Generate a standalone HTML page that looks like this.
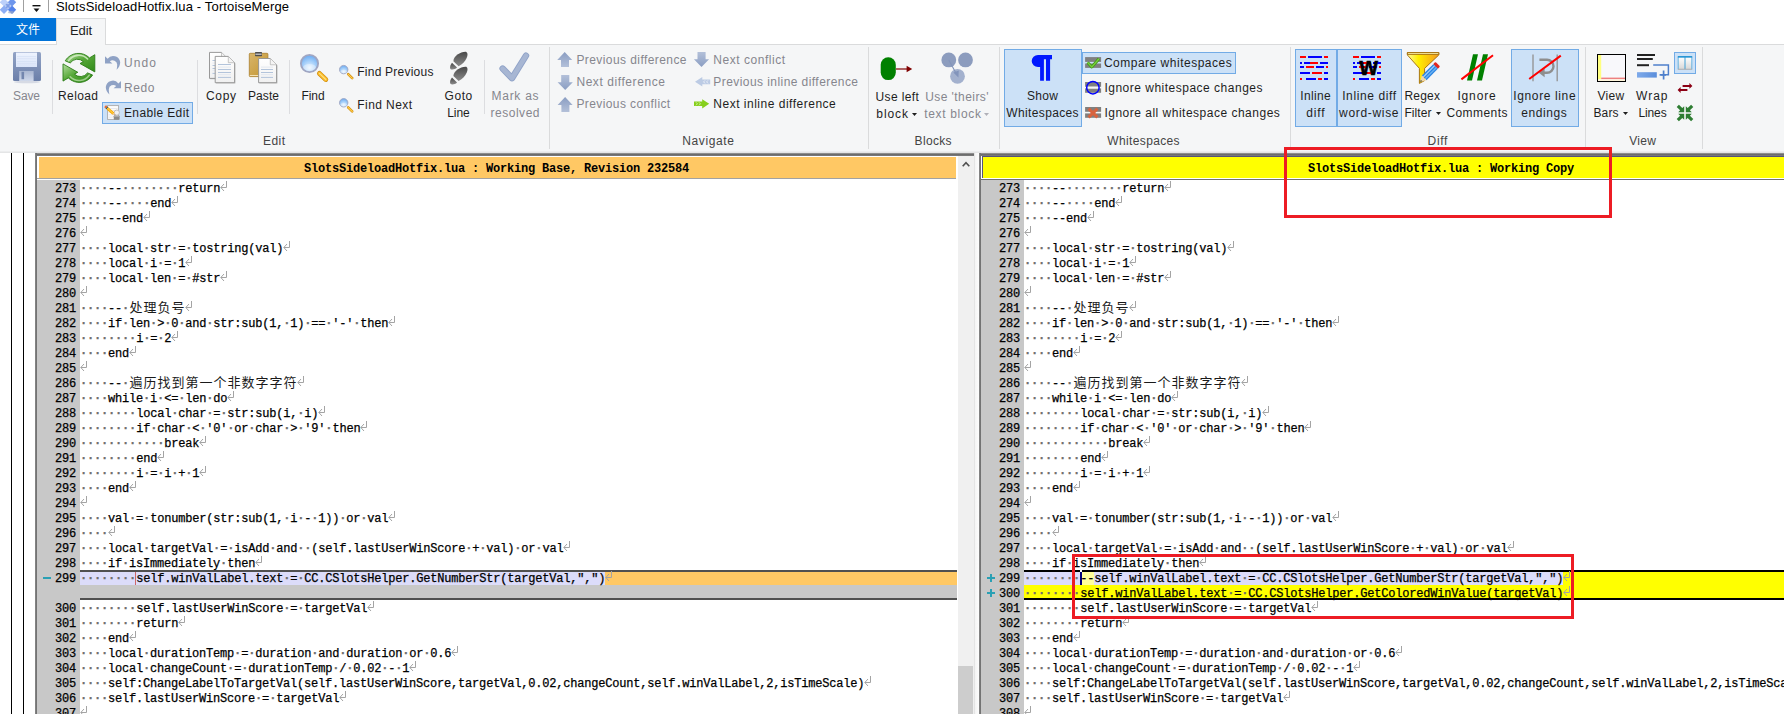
<!DOCTYPE html><html><head><meta charset="utf-8"><title>SlotsSideloadHotfix.lua - TortoiseMerge</title><style>
*{margin:0;padding:0;box-sizing:border-box}
html,body{width:1784px;height:714px;overflow:hidden;background:#fff}
body{position:relative;font-family:"Liberation Sans","Noto Sans CJK SC",sans-serif;font-size:12px;color:#1e1e1e}
.a{position:absolute}
.t{position:absolute;white-space:nowrap;line-height:16px;height:16px;font-size:12px}
.d{color:#86868e}
.g{color:#444}
.sep{position:absolute;width:1px;background:#dcdde0}
.gsep{position:absolute;width:1px;background:#dadbdc;top:47px;height:102px}
.btn{position:absolute;background:#cce1f7;border:1px solid #72abe6}
.code{position:absolute;font-family:"Liberation Mono","Noto Sans CJK SC",monospace;font-size:12px;letter-spacing:-0.2px;white-space:pre;line-height:15px;height:15px;color:#000;-webkit-text-stroke:0.25px #000}
.code i{font-style:normal;color:#6e6e6e;font-weight:bold;-webkit-text-stroke:0.3px #6e6e6e}
.code b{position:relative;top:-3px;-webkit-text-stroke:0;color:#1a1a1a;font-weight:normal;font-family:"Noto Sans CJK SC",sans-serif;font-size:13px;letter-spacing:0;display:inline-block;width:14px;height:15px;line-height:15px;vertical-align:top;text-align:center;overflow:hidden}
.ln{position:absolute;font-family:"Liberation Mono",monospace;font-size:12px;letter-spacing:-0.2px;line-height:15px;height:15px;width:40px;text-align:right;color:#000;-webkit-text-stroke:0.25px #000}
.row{position:absolute;height:15px}
.hd{position:absolute;font-family:"Liberation Mono",monospace;font-weight:bold;font-size:12px;letter-spacing:-0.2px;white-space:pre;line-height:16px;color:#000}
svg{position:absolute;overflow:visible}
</style></head><body>
<div class="a" style="left:0;top:0;width:1784px;height:18px;background:#fff"></div>
<span class="t " style="left:56.0px;top:-1.5px;letter-spacing:0.148px;font-size:13px;color:#000">SlotsSideloadHotfix.lua - TortoiseMerge</span>
<div class="a" style="left:23px;top:0;width:1px;height:12px;background:#a0a0a0"></div>
<div class="a" style="left:48px;top:0;width:1px;height:12px;background:#a0a0a0"></div>
<svg style="left:32px;top:5px" width="9" height="8" viewBox="0 0 9 8"><rect x="0.5" y="0" width="8" height="1.4" fill="#111"/><path d="M1.5 3.5h6L4.5 7z" fill="#111"/></svg>
<div class="a" style="left:0;top:18px;width:56px;height:23px;background:#0173d8"></div>
<span class="t " style="left:16.0px;top:22.0px;letter-spacing:-0.016px;color:#fff;font-size:12px">文件</span>
<div class="a" style="left:0;top:44px;width:1784px;height:108px;background:#f5f6f7;border-top:1px solid #dadbdc"></div>
<div class="a" style="left:56px;top:18px;width:50px;height:27px;background:#f5f6f7;border:1px solid #dadbdc;border-bottom:none"></div>
<span class="t " style="left:70.0px;top:22.5px;letter-spacing:-0.135px;font-size:13px;color:#1e1e1e">Edit</span>
<div class="a" style="left:0;top:151px;width:1784px;height:2px;background:linear-gradient(#f0f1f2,#e0e1e2)"></div>
<div class="gsep" style="left:549px"></div>
<div class="gsep" style="left:868px"></div>
<div class="gsep" style="left:999px"></div>
<div class="gsep" style="left:1290px"></div>
<div class="gsep" style="left:1585px"></div>
<div class="gsep" style="left:1702px"></div>
<div class="sep" style="left:52px;top:60px;height:54px"></div>
<div class="sep" style="left:197px;top:60px;height:54px"></div>
<div class="sep" style="left:289px;top:60px;height:54px"></div>
<div class="sep" style="left:484px;top:60px;height:54px"></div>
<div class="btn" style="left:102px;top:102px;width:91px;height:22px"></div>
<div class="btn" style="left:1004px;top:49px;width:78px;height:78px"></div>
<div class="btn" style="left:1082px;top:52px;width:154px;height:22px"></div>
<div class="btn" style="left:1295px;top:49px;width:42px;height:78px"></div>
<div class="btn" style="left:1337px;top:49px;width:65px;height:78px"></div>
<div class="btn" style="left:1511px;top:49px;width:68px;height:78px"></div>
<div class="btn" style="left:1674px;top:52px;width:22px;height:22px"></div>
<span class="t d" style="left:13.0px;top:88.0px;letter-spacing:-0.120px;">Save</span>
<span class="t " style="left:58.0px;top:88.0px;letter-spacing:0.394px;">Reload</span>
<span class="t d" style="left:124.0px;top:55.0px;letter-spacing:1.104px;">Undo</span>
<span class="t d" style="left:124.0px;top:80.0px;letter-spacing:0.604px;">Redo</span>
<span class="t " style="left:124.0px;top:105.0px;letter-spacing:0.361px;">Enable Edit</span>
<span class="t " style="left:206.0px;top:88.0px;letter-spacing:0.661px;">Copy</span>
<span class="t " style="left:248.0px;top:88.0px;letter-spacing:0.078px;">Paste</span>
<span class="t g" style="left:263.0px;top:133.0px;letter-spacing:0.438px;">Edit</span>
<span class="t " style="left:301.5px;top:88.0px;letter-spacing:-0.081px;">Find</span>
<span class="t " style="left:357.3px;top:64.0px;letter-spacing:0.227px;">Find Previous</span>
<span class="t " style="left:357.3px;top:97.0px;letter-spacing:0.418px;">Find Next</span>
<span class="t " style="left:444.5px;top:88.0px;letter-spacing:0.561px;">Goto</span>
<span class="t " style="left:447.3px;top:105.0px;letter-spacing:-0.096px;">Line</span>
<span class="t d" style="left:491.5px;top:88.0px;letter-spacing:0.735px;">Mark as</span>
<span class="t d" style="left:490.5px;top:105.0px;letter-spacing:0.520px;">resolved</span>
<span class="t d" style="left:576.4px;top:52.0px;letter-spacing:0.421px;">Previous difference</span>
<span class="t d" style="left:576.4px;top:74.0px;letter-spacing:0.571px;">Next difference</span>
<span class="t d" style="left:576.4px;top:96.0px;letter-spacing:0.402px;">Previous conflict</span>
<span class="t d" style="left:713.3px;top:52.0px;letter-spacing:0.537px;">Next conflict</span>
<span class="t d" style="left:713.3px;top:74.0px;letter-spacing:0.434px;">Previous inline difference</span>
<span class="t " style="left:713.3px;top:96.0px;letter-spacing:0.507px;">Next inline difference</span>
<span class="t g" style="left:682.3px;top:133.0px;letter-spacing:0.618px;">Navigate</span>
<span class="t " style="left:875.5px;top:89.0px;letter-spacing:0.387px;">Use left</span>
<span class="t " style="left:876.3px;top:106.0px;letter-spacing:0.921px;">block</span>
<span class="t d" style="left:925.2px;top:89.0px;letter-spacing:0.436px;">Use &#x27;theirs&#x27;</span>
<span class="t d" style="left:924.2px;top:106.0px;letter-spacing:0.677px;">text block</span>
<span class="t g" style="left:914.6px;top:133.0px;letter-spacing:0.331px;">Blocks</span>
<span class="t " style="left:1027.0px;top:88.0px;letter-spacing:0.323px;">Show</span>
<span class="t " style="left:1006.3px;top:105.0px;letter-spacing:0.360px;">Whitespaces</span>
<span class="t " style="left:1103.9px;top:55.0px;letter-spacing:0.504px;">Compare whitespaces</span>
<span class="t " style="left:1104.4px;top:80.0px;letter-spacing:0.500px;">Ignore whitespace changes</span>
<span class="t " style="left:1104.4px;top:105.0px;letter-spacing:0.499px;">Ignore all whitespace changes</span>
<span class="t g" style="left:1107.3px;top:133.0px;letter-spacing:0.360px;">Whitespaces</span>
<span class="t " style="left:1300.3px;top:88.0px;letter-spacing:0.322px;">Inline</span>
<span class="t " style="left:1306.2px;top:105.0px;letter-spacing:0.901px;">diff</span>
<span class="t " style="left:1342.2px;top:88.0px;letter-spacing:0.599px;">Inline diff</span>
<span class="t " style="left:1339.1px;top:105.0px;letter-spacing:0.673px;">word-wise</span>
<span class="t " style="left:1404.4px;top:88.0px;letter-spacing:0.228px;">Regex</span>
<span class="t " style="left:1404.4px;top:105.0px;letter-spacing:0.086px;">Filter</span>
<span class="t " style="left:1457.4px;top:88.0px;letter-spacing:0.854px;">Ignore</span>
<span class="t " style="left:1446.4px;top:105.0px;letter-spacing:0.441px;">Comments</span>
<span class="t " style="left:1513.3px;top:88.0px;letter-spacing:0.625px;">Ignore line</span>
<span class="t " style="left:1521.3px;top:105.0px;letter-spacing:0.559px;">endings</span>
<span class="t g" style="left:1427.6px;top:133.0px;letter-spacing:0.634px;">Diff</span>
<span class="t " style="left:1597.4px;top:88.0px;letter-spacing:0.301px;">View</span>
<span class="t " style="left:1593.5px;top:105.0px;letter-spacing:0.104px;">Bars</span>
<span class="t " style="left:1636.0px;top:88.0px;letter-spacing:1.016px;">Wrap</span>
<span class="t " style="left:1638.4px;top:105.0px;letter-spacing:-0.097px;">Lines</span>
<span class="t g" style="left:1629.2px;top:133.0px;letter-spacing:0.334px;">View</span>
<svg style="left:911.9px;top:113.0px" width="5" height="3" viewBox="0 0 5 3"><path d="M0 0h5L2.5 3z" fill="#1e1e1e"/></svg>
<svg style="left:984.3px;top:113.0px" width="5" height="3" viewBox="0 0 5 3"><path d="M0 0h5L2.5 3z" fill="#b0b0b8"/></svg>
<svg style="left:1436.0px;top:112.0px" width="5" height="3" viewBox="0 0 5 3"><path d="M0 0h5L2.5 3z" fill="#1e1e1e"/></svg>
<svg style="left:1623.0px;top:112.0px" width="5" height="3" viewBox="0 0 5 3"><path d="M0 0h5L2.5 3z" fill="#1e1e1e"/></svg>
<svg style="left:0;top:0" width="1784" height="153" viewBox="0 0 1784 153">
<defs>
<linearGradient id="gSave" x1="0" y1="0" x2="0" y2="1"><stop offset="0" stop-color="#93a4c6"/><stop offset="1" stop-color="#6b7fa9"/></linearGradient>
<linearGradient id="gSaveL" x1="0" y1="0" x2="0" y2="1"><stop offset="0" stop-color="#eef3fe"/><stop offset="1" stop-color="#dbe5f9"/></linearGradient>
<linearGradient id="gSaveS" x1="0" y1="0" x2="0" y2="1"><stop offset="0" stop-color="#aab7d2"/><stop offset="1" stop-color="#cfd8ea"/></linearGradient>
<linearGradient id="gGreen" x1="0" y1="0" x2="1" y2="1"><stop offset="0" stop-color="#b5dfa2"/><stop offset="0.45" stop-color="#58a93a"/><stop offset="1" stop-color="#2f8a17"/></linearGradient>
<linearGradient id="gGreen2" x1="1" y1="1" x2="0" y2="0"><stop offset="0" stop-color="#b5dfa2"/><stop offset="0.45" stop-color="#58a93a"/><stop offset="1" stop-color="#2f8a17"/></linearGradient>
<linearGradient id="gArr" x1="0" y1="0" x2="0" y2="1"><stop offset="0" stop-color="#8a9dc2"/><stop offset="1" stop-color="#b3c0d9"/></linearGradient>
<linearGradient id="gArrD" x1="0" y1="0" x2="0" y2="1"><stop offset="0" stop-color="#b3c0d9"/><stop offset="1" stop-color="#8a9dc2"/></linearGradient>
<linearGradient id="gPage" x1="0" y1="0" x2="0" y2="1"><stop offset="0" stop-color="#ffffff"/><stop offset="1" stop-color="#f0f0f0"/></linearGradient>
<linearGradient id="gClip" x1="0" y1="0" x2="1" y2="1"><stop offset="0" stop-color="#d8b56a"/><stop offset="1" stop-color="#c3952f"/></linearGradient>
<radialGradient id="gLens" cx="0.5" cy="0.75" r="0.8"><stop offset="0" stop-color="#e8f4ff"/><stop offset="0.55" stop-color="#9ccaf9"/><stop offset="1" stop-color="#5ea2ee"/></radialGradient>
<linearGradient id="gHandle" x1="0" y1="0" x2="1" y2="0"><stop offset="0" stop-color="#e89a10"/><stop offset="0.5" stop-color="#ffdc70"/><stop offset="1" stop-color="#e89a10"/></linearGradient>
<linearGradient id="gFoot" x1="0" y1="0" x2="0" y2="1"><stop offset="0" stop-color="#484848"/><stop offset="1" stop-color="#8c8c8c"/></linearGradient>
<linearGradient id="gFunnel" x1="0" y1="0" x2="1" y2="0"><stop offset="0" stop-color="#fff8a0"/><stop offset="0.35" stop-color="#ffee00"/><stop offset="1" stop-color="#f59a1c"/></linearGradient>
<linearGradient id="gBar" x1="0" y1="0" x2="1" y2="0"><stop offset="0" stop-color="#7eaaea"/><stop offset="1" stop-color="#5b8edb"/></linearGradient>
<linearGradient id="gPane" x1="0" y1="0" x2="0" y2="1"><stop offset="0" stop-color="#ffffff"/><stop offset="1" stop-color="#d8d8d8"/></linearGradient>
</defs>
<path d="M4.0 -2.0L8.2 2.2L4.0 6.4L-0.2 2.2z" fill="#bcd0fa"/>
<path d="M12.0 -2.0L16.2 2.2L12.0 6.4L7.8 2.2z" fill="#6e96ec"/>
<path d="M4.0 5.6L8.2 9.8L4.0 14.0L-0.2 9.8z" fill="#8eaef4"/>
<path d="M12.0 5.6L16.2 9.8L12.0 14.0L7.8 9.8z" fill="#5482ea"/>
<path d="M8.0 2.2L11.8 6.0L8.0 9.8L4.2 6.0z" fill="#7f9ee6"/>
<path d="M8.0 2.7L8.9 3.6L8.0 4.5L7.1 3.6z" fill="#d6e2fb"/>
<path d="M5.8 5.1L6.7 6.0L5.8 6.9L4.9 6.0z" fill="#d6e2fb"/>
<path d="M10.2 5.1L11.1 6.0L10.2 6.9L9.3 6.0z" fill="#d6e2fb"/>
<path d="M8.0 7.3L8.9 8.2L8.0 9.1L7.1 8.2z" fill="#d6e2fb"/>
<ellipse cx="11" cy="12.3" rx="3" ry="1.2" fill="#9aa8c8" opacity="0.7"/>
<ellipse cx="27" cy="82" rx="13" ry="1.3" fill="#c9cfdb" opacity="0.7"/>
<rect x="13" y="52" width="28" height="29" rx="1.5" fill="url(#gSave)"/>
<rect x="16" y="52.6" width="21" height="14.4" fill="url(#gSaveL)"/>
<rect x="17" y="56.0" width="19" height="0.6" fill="#d3def4"/>
<rect x="17" y="58.5" width="19" height="0.6" fill="#d3def4"/>
<rect x="17" y="61.0" width="19" height="0.6" fill="#d3def4"/>
<rect x="17" y="63.5" width="19" height="0.6" fill="#d3def4"/>
<rect x="19.2" y="71" width="14.4" height="10" fill="url(#gSaveS)"/>
<rect x="21.5" y="71.8" width="2.6" height="7.4" fill="#7386ae"/>
<path d="M65.2 60.8A15.6 15.6 0 0 1 89.5 57.9L94.8 54.7L94.8 71.9L80 63.5L83.4 61.7A8.6 8.6 0 0 0 70.3 62.9z" fill="url(#gGreen)" stroke="#2b7d16" stroke-width="0.9" stroke-linejoin="round"/>
<path d="M65.2 60.8A15.6 15.6 0 0 1 89.5 57.9L94.8 54.7L94.8 71.9L80 63.5L83.4 61.7A8.6 8.6 0 0 0 70.3 62.9z" fill="url(#gGreen2)" stroke="#2b7d16" stroke-width="0.9" stroke-linejoin="round" transform="rotate(180 78.9 67.9)"/>
<path d="M68.6 60.6A12.4 12.4 0 0 1 87.6 59" fill="none" stroke="#d6efc8" stroke-width="1.6" stroke-linecap="round" opacity="0.85"/>
<path d="M68.6 60.6A12.4 12.4 0 0 1 87.6 59" fill="none" stroke="#d6efc8" stroke-width="1.6" stroke-linecap="round" opacity="0.6" transform="rotate(180 78.9 67.9)"/>
<path d="M105 56.3L105 63.6L112.4 63.6L109.8 61.2A4.6 4.6 0 0 1 117.2 64.6Q117.2 67.4 116.6 69.8Q120.2 66.4 120.2 62.3A7 7 0 0 0 107.6 58.8z" fill="#8fa2c5"/>
<path d="M105 56.3L105 63.6L112.4 63.6L109.8 61.2A4.6 4.6 0 0 1 117.2 64.6Q117.2 67.4 116.6 69.8Q120.2 66.4 120.2 62.3A7 7 0 0 0 107.6 58.8z" fill="#8fa2c5" transform="translate(226 24.7) scale(-1 1)"/>
<rect x="107.6" y="105.6" width="11" height="13.8" fill="#fbfbfb" stroke="#ababab" stroke-width="0.9"/>
<rect x="108.6" y="108.0" width="9" height="0.6" fill="#dcdcdc"/>
<rect x="108.6" y="110.2" width="9" height="0.6" fill="#dcdcdc"/>
<rect x="108.6" y="112.4" width="9" height="0.6" fill="#dcdcdc"/>
<rect x="108.6" y="114.6" width="9" height="0.6" fill="#dcdcdc"/>
<rect x="108.6" y="116.8" width="9" height="0.6" fill="#dcdcdc"/>
<circle cx="116.8" cy="112.6" r="2.6" fill="#f2f2f2" stroke="#b8b8b8" stroke-width="0.9"/>
<rect x="113.8" y="115.8" width="5.8" height="3.9" rx="0.4" fill="#8a8a8a"/>
<rect x="113.8" y="115.8" width="5.8" height="1.2" rx="0.4" fill="#a8a8a8"/>
<g transform="translate(105.2 106.3) rotate(42)">
<rect x="-0.2" y="-1.4" width="1.9" height="2.8" rx="0.6" fill="#ea6a34"/>
<rect x="1.7" y="-1.4" width="1.2" height="2.8" fill="#3c4a4a"/>
<rect x="2.9" y="-1.4" width="8.1" height="2.8" fill="#f6a800"/>
<rect x="2.9" y="-0.5" width="8.1" height="0.9" fill="#ffd24a"/>
<path d="M11 -1.4L13.7 0L11 1.4z" fill="#eec49a"/>
<path d="M12.7 -0.5L13.7 0L12.7 0.5z" fill="#2c2c2c"/>
</g>
<path d="M209.5 52.4H221.5L226.5 57.4V78.4H209.5z" fill="#9a9a9a" opacity="0.55" transform="translate(0.8 0.8)"/>
<path d="M209.5 52.4H221.5L226.5 57.4V78.4H209.5z" fill="url(#gPage)" stroke="#8e8e8e" stroke-width="0.9"/>
<path d="M221.5 52.4V57.4H226.5" fill="#f4f4f4" stroke="#b0b0b0" stroke-width="0.7"/>
<rect x="212.5" y="60.0" width="9.5" height="1" fill="#b3c4db"/>
<rect x="212.5" y="62.5" width="9.5" height="1" fill="#e3e8f1"/>
<rect x="212.5" y="65.0" width="9.5" height="1" fill="#b3c4db"/>
<rect x="212.5" y="68.0" width="9.5" height="1" fill="#b3c4db"/>
<rect x="212.5" y="70.2" width="9.5" height="1" fill="#e3e8f1"/>
<rect x="212.5" y="72.9" width="9.5" height="1" fill="#b3c4db"/>
<path d="M215.2 56.4H228.3L234.6 62.7V82.7H215.2z" fill="#9a9a9a" opacity="0.55" transform="translate(0.8 0.8)"/>
<path d="M215.2 56.4H228.3L234.6 62.7V82.7H215.2z" fill="url(#gPage)" stroke="#8e8e8e" stroke-width="0.9"/>
<path d="M228.3 56.4V62.7H234.6" fill="#f4f4f4" stroke="#b0b0b0" stroke-width="0.7"/>
<rect x="218.0" y="64.0" width="13.0" height="1" fill="#b3c4db"/>
<rect x="218.0" y="66.6" width="13.0" height="1" fill="#e3e8f1"/>
<rect x="218.0" y="69.0" width="13.0" height="1" fill="#b3c4db"/>
<rect x="218.0" y="72.0" width="13.0" height="1" fill="#b3c4db"/>
<rect x="218.0" y="74.2" width="13.0" height="1" fill="#e3e8f1"/>
<rect x="218.0" y="76.9" width="13.0" height="1" fill="#b3c4db"/>
<rect x="249.3" y="53.3" width="18.6" height="23.3" rx="0.8" fill="url(#gClip)" stroke="#a97f2c" stroke-width="0.8"/>
<rect x="249.8" y="75" width="17.6" height="1" fill="#f4e2b4"/>
<rect x="255" y="52" width="7" height="4.2" rx="0.6" fill="#4e4e4e"/>
<rect x="255.4" y="53.6" width="6.2" height="1.2" fill="#d0d0d0"/>
<path d="M258.6 58.5H270.3L276.6 64.8V82.7H258.6z" fill="#9a9a9a" opacity="0.55" transform="translate(0.8 0.8)"/>
<path d="M258.6 58.5H270.3L276.6 64.8V82.7H258.6z" fill="url(#gPage)" stroke="#8e8e8e" stroke-width="0.9"/>
<path d="M270.3 58.5V64.8H276.6" fill="#f4f4f4" stroke="#b0b0b0" stroke-width="0.7"/>
<rect x="261.0" y="66.6" width="12.0" height="1" fill="#e3e8f1"/>
<rect x="261.0" y="69.0" width="12.0" height="1" fill="#b3c4db"/>
<rect x="261.0" y="72.0" width="12.0" height="1" fill="#b3c4db"/>
<rect x="261.0" y="74.2" width="12.0" height="1" fill="#e3e8f1"/>
<rect x="261.0" y="76.9" width="12.0" height="1" fill="#b3c4db"/>
<circle cx="309.5" cy="63.5" r="8.6" fill="url(#gLens)" stroke="#a0a6c2" stroke-width="1.9"/>
<ellipse cx="309.5" cy="67.4" rx="6.4" ry="3.4" fill="#ffffff" opacity="0.35"/>
<line x1="319.4" y1="73.4" x2="325.8" y2="79.5" stroke="#c8860c" stroke-width="4.8" stroke-linecap="round"/>
<line x1="319.4" y1="73.4" x2="325.8" y2="79.5" stroke="#f8b828" stroke-width="3.8" stroke-linecap="round"/>
<line x1="319.4" y1="73.4" x2="325.8" y2="79.5" stroke="#ffe07c" stroke-width="1.3" stroke-linecap="round"/>
<circle cx="343.7" cy="69.6" r="4.2" fill="url(#gLens)" stroke="#a0a6c2" stroke-width="0.9"/>
<ellipse cx="343.7" cy="71.5" rx="3.2" ry="1.7" fill="#ffffff" opacity="0.35"/>
<line x1="348.2" y1="74.2" x2="352.2" y2="78.2" stroke="#c8860c" stroke-width="2.5" stroke-linecap="round"/>
<line x1="348.2" y1="74.2" x2="352.2" y2="78.2" stroke="#f8b828" stroke-width="1.5" stroke-linecap="round"/>
<line x1="348.2" y1="74.2" x2="352.2" y2="78.2" stroke="#ffe07c" stroke-width="0.5" stroke-linecap="round"/>
<circle cx="343.7" cy="102.8" r="4.2" fill="url(#gLens)" stroke="#a0a6c2" stroke-width="0.9"/>
<ellipse cx="343.7" cy="104.7" rx="3.2" ry="1.7" fill="#ffffff" opacity="0.35"/>
<line x1="348.2" y1="107.4" x2="352.2" y2="111.4" stroke="#c8860c" stroke-width="2.5" stroke-linecap="round"/>
<line x1="348.2" y1="107.4" x2="352.2" y2="111.4" stroke="#f8b828" stroke-width="1.5" stroke-linecap="round"/>
<line x1="348.2" y1="107.4" x2="352.2" y2="111.4" stroke="#ffe07c" stroke-width="0.5" stroke-linecap="round"/>
<g transform="translate(0 0.0)">
<path d="M453.4 61.2C453.4 56 461 51.4 466.3 51.9C469.3 53.5 466.8 61.8 458.6 66.2z" fill="url(#gFoot)"/>
<path d="M452 62.8L457 67.6C455 69.8 451.6 70 450.4 69C449.4 67.2 450.6 64.4 452 62.8z" fill="url(#gFoot)"/>
</g>
<g transform="translate(0 14.8)">
<path d="M453.4 61.2C453.4 56 461 51.4 466.3 51.9C469.3 53.5 466.8 61.8 458.6 66.2z" fill="url(#gFoot)"/>
<path d="M452 62.8L457 67.6C455 69.8 451.6 70 450.4 69C449.4 67.2 450.6 64.4 452 62.8z" fill="url(#gFoot)"/>
</g>
<path d="M502.6 68.6L512 78.2L526 55.6" fill="none" stroke="#90a3c8" stroke-width="6.4" stroke-linecap="round" stroke-linejoin="round"/>
<path d="M502.6 68.6L512 78.2L526 55.6" fill="none" stroke="#a7b6d3" stroke-width="4.6" stroke-linecap="round" stroke-linejoin="round"/>
<path d="M564.7 52.0L572.2 59.9H569.0V66.9H561.0V59.9H557.2z" fill="url(#gArr)"/>
<path d="M561.2 75.1H569.3V82.3H572.8L565.2 90.1L557.6 82.3H561.2z" fill="url(#gArrD)"/>
<path d="M565.1 97.0L572.6 104.9H569.4V111.9H561.4V104.9H557.6z" fill="url(#gArr)"/>
<path d="M697.5 52.0H705.6V59.2H709.1L701.5 67.0L693.9 59.2H697.5z" fill="url(#gArrD)"/>
<path d="M695 81.8L702.3 77V79.6H710.2V84.2H702.3V86.6z" fill="#bccbe4"/>
<path d="M705 80.4L703.6 81.9L705 83.4M708 80.4L706.6 81.9L708 83.4" fill="none" stroke="#eef2f9" stroke-width="0.9"/>
<path d="M709.2 103.8L702.2 99.2V101.6H694V106H702.2V108.5z" fill="#86cf1c"/>
<path d="M696 102.3L697.4 103.8L696 105.3M699 102.3L700.4 103.8L699 105.3" fill="none" stroke="#d9f2ac" stroke-width="0.9"/>
<rect x="880.7" y="57.3" width="15.1" height="22.8" rx="7.5" fill="#008000"/>
<line x1="896" y1="69" x2="908" y2="69" stroke="#800000" stroke-width="1.2"/>
<path d="M906.6 65.8L912.2 69L906.6 72.2z" fill="#800000"/>
<circle cx="948.8" cy="59.9" r="7.4" fill="#8c9cbe"/>
<circle cx="965.5" cy="59.9" r="7.4" fill="#8c9cbe"/>
<circle cx="957.5" cy="76.3" r="7.4" fill="#a3b1ce"/>
<path d="M948.8 60L957 75" stroke="#8294bb" stroke-width="1.1" fill="none"/>
<path d="M953.4 72.6L958.4 77.6L958.8 70.4z" fill="#8294bb"/>
<path d="M1038 54.9H1052V59.3H1050.1V80.8H1046V59.3H1043.9V80.8H1040.1V67.1H1038A6.3 6.1 0 0 1 1038 54.9z" fill="#0018ff"/>
<rect x="1085.1" y="57.1" width="16" height="4.8" fill="#808080"/>
<rect x="1085.1" y="63.5" width="16" height="4.4" fill="#808080"/>
<path d="M1087.6 62.4L1091.8 67L1099 58.8" fill="none" stroke="#3f9a17" stroke-width="3" stroke-linejoin="round"/>
<path d="M1087.6 62.4L1091.8 67L1099 58.8" fill="none" stroke="#78cc3c" stroke-width="1.4" stroke-linejoin="round"/>
<rect x="1085.1" y="82.0" width="16" height="4.8" fill="#808080"/>
<rect x="1085.1" y="88.4" width="16" height="4.4" fill="#808080"/>
<rect x="1087" y="86.6" width="12" height="2" fill="#f5f6f7"/>
<circle cx="1092.9" cy="87.7" r="6.2" fill="none" stroke="#0000ff" stroke-width="1.5"/>
<rect x="1085.1" y="107.0" width="16" height="4.8" fill="#808080"/>
<rect x="1085.1" y="113.4" width="16" height="4.4" fill="#808080"/>
<path d="M1088.6 108.6L1097.4 117.4M1097.4 108.6L1088.6 117.4" stroke="#d8633f" stroke-width="3" fill="none"/>
<rect x="1300" y="56" width="6" height="2" fill="#ff0000"/>
<rect x="1308" y="56" width="14" height="2" fill="#0000ff"/>
<rect x="1324" y="56" width="4" height="2" fill="#ff0000"/>
<rect x="1300" y="62" width="2" height="2" fill="#0000ff"/>
<rect x="1304" y="62" width="6" height="2" fill="#0000ff"/>
<rect x="1310" y="62" width="8" height="2" fill="#ff0000"/>
<rect x="1320" y="62" width="8" height="2" fill="#0000ff"/>
<rect x="1300" y="66" width="4" height="2" fill="#0000ff"/>
<rect x="1306" y="66" width="8" height="2" fill="#ff0000"/>
<rect x="1316" y="66" width="8" height="2" fill="#0000ff"/>
<rect x="1326" y="66" width="2" height="2" fill="#ff0000"/>
<rect x="1300" y="72" width="10" height="2" fill="#0000ff"/>
<rect x="1312" y="72" width="10" height="2" fill="#ff0000"/>
<rect x="1324" y="72" width="4" height="2" fill="#0000ff"/>
<rect x="1300" y="78" width="2" height="2" fill="#ff0000"/>
<rect x="1306" y="78" width="10" height="2" fill="#0000ff"/>
<rect x="1318" y="78" width="4" height="2" fill="#ff0000"/>
<rect x="1324" y="78" width="4" height="2" fill="#0000ff"/>
<rect x="1353" y="56" width="6" height="2" fill="#ff0000"/>
<rect x="1361" y="56" width="14" height="2" fill="#0000ff"/>
<rect x="1377" y="56" width="4" height="2" fill="#ff0000"/>
<rect x="1353" y="62" width="2" height="2" fill="#0000ff"/>
<rect x="1357" y="62" width="6" height="2" fill="#0000ff"/>
<rect x="1363" y="62" width="8" height="2" fill="#ff0000"/>
<rect x="1373" y="62" width="8" height="2" fill="#0000ff"/>
<rect x="1353" y="66" width="4" height="2" fill="#0000ff"/>
<rect x="1359" y="66" width="8" height="2" fill="#ff0000"/>
<rect x="1369" y="66" width="8" height="2" fill="#0000ff"/>
<rect x="1379" y="66" width="2" height="2" fill="#ff0000"/>
<rect x="1353" y="72" width="10" height="2" fill="#0000ff"/>
<rect x="1365" y="72" width="10" height="2" fill="#ff0000"/>
<rect x="1377" y="72" width="4" height="2" fill="#0000ff"/>
<rect x="1353" y="78" width="2" height="2" fill="#ff0000"/>
<rect x="1359" y="78" width="10" height="2" fill="#0000ff"/>
<rect x="1371" y="78" width="4" height="2" fill="#ff0000"/>
<rect x="1377" y="78" width="4" height="2" fill="#0000ff"/>
<text x="1359.5" y="75" font-family="Liberation Sans, sans-serif" font-weight="bold" font-size="26" fill="#000" stroke="#000" stroke-width="0.6" textLength="18.4" lengthAdjust="spacingAndGlyphs">w</text>
<path d="M1407.4 52.6H1438.8V55L1424.6 68.4V80.6L1419.4 83.4V68.4L1407.4 55z" fill="url(#gFunnel)" stroke="#a06a08" stroke-width="0.9" stroke-linejoin="round"/>
<path d="M1407.4 52.6H1438.8V54.4H1407.4z" fill="#fff6b0" stroke="#a06a08" stroke-width="0.9"/>
<g transform="rotate(45 1429 73)">
<rect x="1425.7" y="60.6" width="6.6" height="3.4" rx="1" fill="#e02820"/>
<rect x="1425.7" y="63.8" width="6.6" height="16" fill="#2a84e2"/>
<rect x="1427.1" y="63.8" width="1.3" height="16" fill="#9fd0fa"/>
<rect x="1429.7" y="63.8" width="1.3" height="16" fill="#6cb2f2"/>
<path d="M1425.7 79.8H1432.3L1429 85.8z" fill="#f0d8a8"/>
<path d="M1428.1 83.6H1429.9L1429 85.6z" fill="#404040"/>
</g>
<path d="M1467 80.4L1473 54.2H1478L1472 80.4z" fill="#008000"/>
<path d="M1477 80.4L1483 54.2H1488L1482 80.4z" fill="#008000"/>
<line x1="1461.4" y1="79.4" x2="1493" y2="55.2" stroke="#ff0000" stroke-width="2"/>
<line x1="1533" y1="54.6" x2="1533" y2="81.2" stroke="#969696" stroke-width="1.4"/>
<line x1="1557.2" y1="54.6" x2="1557.2" y2="81.2" stroke="#969696" stroke-width="1.4"/>
<path d="M1539.4 59.8H1547A6.5 6.5 0 0 1 1547 72.8H1543" fill="none" stroke="#8e8e8e" stroke-width="2.4"/>
<path d="M1538.8 72.8L1544.6 68.4V77.2z" fill="#8e8e8e"/>
<line x1="1529.2" y1="79" x2="1560.8" y2="55.6" stroke="#ff0000" stroke-width="2"/>
<rect x="1597.5" y="54.5" width="28" height="27" fill="#f8f8fb" stroke="#000" stroke-width="1"/>
<rect x="1598" y="55" width="3.2" height="24.4" fill="#ffff80"/>
<rect x="1601.2" y="77.6" width="23.8" height="1.6" fill="#ee8080"/>
<rect x="1598" y="79.4" width="27" height="1.6" fill="#fff6dc"/>
<rect x="1637" y="54" width="18" height="2" fill="#222"/>
<rect x="1637" y="58" width="15.8" height="2" fill="#222"/>
<rect x="1637" y="64.2" width="12" height="2" fill="#222"/>
<rect x="1637" y="72.2" width="19.8" height="5.4" fill="url(#gBar)"/>
<path d="M1653.2 65H1668.4V74.8H1661" fill="none" stroke="#4f80cc" stroke-width="1.5"/>
<path d="M1659.6 74.8H1666M1663.6 70.4V79.6" stroke="#4f80cc" stroke-width="1.7" fill="none"/>
<rect x="1678.2" y="57" width="13.6" height="12" fill="url(#gPane)"/>
<path d="M1678.2 69.2V56.8H1691.8V69.2" fill="none" stroke="#4aa6dc" stroke-width="0.8"/>
<rect x="1677.8" y="56" width="14.4" height="1.6" fill="#2a96d4"/>
<line x1="1685" y1="57" x2="1685" y2="69.2" stroke="#2a96d4" stroke-width="0.9"/>
<rect x="1677.8" y="68.8" width="14.4" height="0.9" fill="#a8a8a8"/>
<path d="M1682.6 85H1689.4V83L1692.4 85.9L1689.4 88.8V86.9H1682.6z" fill="#8c0014"/>
<path d="M1687.4 89.1H1680.6V87.1L1677.6 90L1680.6 92.9V91H1687.4z" fill="#8c0014"/>
<path d="M1684.2 112.2L1678.2 112.2L1680.1 110.3L1676.7 106.9L1678.9 104.7L1682.3 108.1L1684.2 106.2z" fill="#2e7d32"/>
<path d="M1685.8 112.2L1691.8 112.2L1689.9 110.3L1693.3 106.9L1691.1 104.7L1687.7 108.1L1685.8 106.2z" fill="#2e7d32"/>
<path d="M1684.2 113.8L1678.2 113.8L1680.1 115.7L1676.7 119.1L1678.9 121.3L1682.3 117.9L1684.2 119.8z" fill="#2e7d32"/>
<path d="M1685.8 113.8L1691.8 113.8L1689.9 115.7L1693.3 119.1L1691.1 121.3L1687.7 117.9L1685.8 119.8z" fill="#2e7d32"/>
</svg>
<div class="a" style="left:0;top:153px;width:1784px;height:561px;background:#fff"></div>
<div class="a" style="left:11px;top:153px;width:1px;height:561px;background:#000"></div>
<div class="a" style="left:23px;top:153px;width:1px;height:561px;background:#000"></div>
<div class="a" style="left:35px;top:153px;width:939px;height:3px;background:linear-gradient(#a2a2a2,#6c6c6c 45%,#707070 80%,#a0a0a0)"></div>
<div class="a" style="left:35px;top:153px;width:2px;height:561px;background:linear-gradient(90deg,#8a8a8a,#6c6c6c)"></div>
<div class="a" style="left:37px;top:156px;width:937px;height:24px;background:#fff"></div>
<div class="a" style="left:39px;top:157px;width:935px;height:21px;background:#ffc864"></div>
<div class="a" style="left:37px;top:178px;width:937px;height:1px;background:#a2a2a2"></div>
<span class="hd" style="left:304px;top:161px">SlotsSideloadHotfix.lua : Working Base, Revision 232584</span>
<div class="a" style="left:37px;top:180px;width:43px;height:534px;background:#c8c8c8"></div>
<div class="a" style="left:956px;top:156px;width:2px;height:558px;background:#fff"></div>
<div class="a" style="left:958px;top:156px;width:16px;height:558px;background:#f0f0f0"></div>
<div class="a" style="left:958px;top:666px;width:15px;height:48px;background:#cdcdcd"></div>
<svg style="left:962px;top:161px" width="8" height="6" viewBox="0 0 8 6"><path d="M0.7 5.3L4 1.6l3.3 3.7" fill="none" stroke="#505050" stroke-width="1.6"/></svg>
<div class="a" style="left:974px;top:153px;width:5px;height:561px;background:linear-gradient(90deg,#e4e4e4 0,#e4e4e4 20%,#f4f4f4 20%,#fdfdfd)"></div>
<div class="a" style="left:979px;top:153px;width:805px;height:3px;background:linear-gradient(#a2a2a2,#6c6c6c 45%,#707070 80%,#a0a0a0)"></div>
<div class="a" style="left:979px;top:153px;width:2px;height:561px;background:linear-gradient(90deg,#8a8a8a,#6c6c6c)"></div>
<div class="a" style="left:981px;top:156px;width:803px;height:24px;background:#fff"></div>
<div class="a" style="left:982px;top:156px;width:802px;height:22px;background:#ffff00;border-left:1px solid #55557a;border-top:1px solid #55557a"></div>
<div class="a" style="left:981px;top:179px;width:803px;height:1px;background:#707070"></div>
<span class="hd" style="left:1308px;top:161px">SlotsSideloadHotfix.lua : Working Copy</span>
<div class="a" style="left:981px;top:180px;width:43px;height:534px;background:#c8c8c8"></div>
<div class="a" style="left:80px;top:180px;width:877px;height:534px;overflow:hidden"><div class="a" style="left:-80px;top:-180px;width:1784px;height:714px">
<div class="row" style="left:80px;top:570px;width:877px;background:#ffc864"></div>
<div class="row" style="left:80px;top:570px;width:525.0px;background:#dcdcfa"></div>
<div class="row" style="left:80px;top:585px;width:877px;background:#c8c8c8"></div>
<div class="a" style="left:80px;top:570px;width:877px;height:2px;background:#505050"></div>
<div class="a" style="left:80px;top:598px;width:877px;height:2px;background:#505050"></div>
<div class="a" style="left:135px;top:572px;width:1px;height:13px;background:#d06868"></div>
<span class="code" style="left:80.0px;top:182px"><i>·</i><i>·</i><i>·</i><i>·</i>--<i>·</i><i>·</i><i>·</i><i>·</i><i>·</i><i>·</i><i>·</i><i>·</i>return</span><svg style="left:220.0px;top:180px" width="7" height="15" viewBox="0 0 7 15"><path d="M6.5 1V7.5H1M4 4L0.8 7.5L4 11" fill="none" stroke="#a4a4a4" stroke-width="1"/></svg>
<span class="code" style="left:80.0px;top:197px"><i>·</i><i>·</i><i>·</i><i>·</i>--<i>·</i><i>·</i><i>·</i><i>·</i>end</span><svg style="left:171.0px;top:195px" width="7" height="15" viewBox="0 0 7 15"><path d="M6.5 1V7.5H1M4 4L0.8 7.5L4 11" fill="none" stroke="#a4a4a4" stroke-width="1"/></svg>
<span class="code" style="left:80.0px;top:212px"><i>·</i><i>·</i><i>·</i><i>·</i>--end</span><svg style="left:143.0px;top:210px" width="7" height="15" viewBox="0 0 7 15"><path d="M6.5 1V7.5H1M4 4L0.8 7.5L4 11" fill="none" stroke="#a4a4a4" stroke-width="1"/></svg>
<span class="code" style="left:80.0px;top:227px"></span><svg style="left:80.0px;top:225px" width="7" height="15" viewBox="0 0 7 15"><path d="M6.5 1V7.5H1M4 4L0.8 7.5L4 11" fill="none" stroke="#a4a4a4" stroke-width="1"/></svg>
<span class="code" style="left:80.0px;top:242px"><i>·</i><i>·</i><i>·</i><i>·</i>local<i>·</i>str<i>·</i>=<i>·</i>tostring(val)</span><svg style="left:283.0px;top:240px" width="7" height="15" viewBox="0 0 7 15"><path d="M6.5 1V7.5H1M4 4L0.8 7.5L4 11" fill="none" stroke="#a4a4a4" stroke-width="1"/></svg>
<span class="code" style="left:80.0px;top:257px"><i>·</i><i>·</i><i>·</i><i>·</i>local<i>·</i>i<i>·</i>=<i>·</i>1</span><svg style="left:185.0px;top:255px" width="7" height="15" viewBox="0 0 7 15"><path d="M6.5 1V7.5H1M4 4L0.8 7.5L4 11" fill="none" stroke="#a4a4a4" stroke-width="1"/></svg>
<span class="code" style="left:80.0px;top:272px"><i>·</i><i>·</i><i>·</i><i>·</i>local<i>·</i>len<i>·</i>=<i>·</i>#str</span><svg style="left:220.0px;top:270px" width="7" height="15" viewBox="0 0 7 15"><path d="M6.5 1V7.5H1M4 4L0.8 7.5L4 11" fill="none" stroke="#a4a4a4" stroke-width="1"/></svg>
<span class="code" style="left:80.0px;top:287px"></span><svg style="left:80.0px;top:285px" width="7" height="15" viewBox="0 0 7 15"><path d="M6.5 1V7.5H1M4 4L0.8 7.5L4 11" fill="none" stroke="#a4a4a4" stroke-width="1"/></svg>
<span class="code" style="left:80.0px;top:302px"><i>·</i><i>·</i><i>·</i><i>·</i>--<i>·</i><b>处</b><b>理</b><b>负</b><b>号</b></span><svg style="left:185.0px;top:300px" width="7" height="15" viewBox="0 0 7 15"><path d="M6.5 1V7.5H1M4 4L0.8 7.5L4 11" fill="none" stroke="#a4a4a4" stroke-width="1"/></svg>
<span class="code" style="left:80.0px;top:317px"><i>·</i><i>·</i><i>·</i><i>·</i>if<i>·</i>len<i>·</i>&gt;<i>·</i>0<i>·</i>and<i>·</i>str:sub(1,<i>·</i>1)<i>·</i>==<i>·</i>&#x27;-&#x27;<i>·</i>then</span><svg style="left:388.0px;top:315px" width="7" height="15" viewBox="0 0 7 15"><path d="M6.5 1V7.5H1M4 4L0.8 7.5L4 11" fill="none" stroke="#a4a4a4" stroke-width="1"/></svg>
<span class="code" style="left:80.0px;top:332px"><i>·</i><i>·</i><i>·</i><i>·</i><i>·</i><i>·</i><i>·</i><i>·</i>i<i>·</i>=<i>·</i>2</span><svg style="left:171.0px;top:330px" width="7" height="15" viewBox="0 0 7 15"><path d="M6.5 1V7.5H1M4 4L0.8 7.5L4 11" fill="none" stroke="#a4a4a4" stroke-width="1"/></svg>
<span class="code" style="left:80.0px;top:347px"><i>·</i><i>·</i><i>·</i><i>·</i>end</span><svg style="left:129.0px;top:345px" width="7" height="15" viewBox="0 0 7 15"><path d="M6.5 1V7.5H1M4 4L0.8 7.5L4 11" fill="none" stroke="#a4a4a4" stroke-width="1"/></svg>
<span class="code" style="left:80.0px;top:362px"></span><svg style="left:80.0px;top:360px" width="7" height="15" viewBox="0 0 7 15"><path d="M6.5 1V7.5H1M4 4L0.8 7.5L4 11" fill="none" stroke="#a4a4a4" stroke-width="1"/></svg>
<span class="code" style="left:80.0px;top:377px"><i>·</i><i>·</i><i>·</i><i>·</i>--<i>·</i><b>遍</b><b>历</b><b>找</b><b>到</b><b>第</b><b>一</b><b>个</b><b>非</b><b>数</b><b>字</b><b>字</b><b>符</b></span><svg style="left:297.0px;top:375px" width="7" height="15" viewBox="0 0 7 15"><path d="M6.5 1V7.5H1M4 4L0.8 7.5L4 11" fill="none" stroke="#a4a4a4" stroke-width="1"/></svg>
<span class="code" style="left:80.0px;top:392px"><i>·</i><i>·</i><i>·</i><i>·</i>while<i>·</i>i<i>·</i>&lt;=<i>·</i>len<i>·</i>do</span><svg style="left:227.0px;top:390px" width="7" height="15" viewBox="0 0 7 15"><path d="M6.5 1V7.5H1M4 4L0.8 7.5L4 11" fill="none" stroke="#a4a4a4" stroke-width="1"/></svg>
<span class="code" style="left:80.0px;top:407px"><i>·</i><i>·</i><i>·</i><i>·</i><i>·</i><i>·</i><i>·</i><i>·</i>local<i>·</i>char<i>·</i>=<i>·</i>str:sub(i,<i>·</i>i)</span><svg style="left:318.0px;top:405px" width="7" height="15" viewBox="0 0 7 15"><path d="M6.5 1V7.5H1M4 4L0.8 7.5L4 11" fill="none" stroke="#a4a4a4" stroke-width="1"/></svg>
<span class="code" style="left:80.0px;top:422px"><i>·</i><i>·</i><i>·</i><i>·</i><i>·</i><i>·</i><i>·</i><i>·</i>if<i>·</i>char<i>·</i>&lt;<i>·</i>&#x27;0&#x27;<i>·</i>or<i>·</i>char<i>·</i>&gt;<i>·</i>&#x27;9&#x27;<i>·</i>then</span><svg style="left:360.0px;top:420px" width="7" height="15" viewBox="0 0 7 15"><path d="M6.5 1V7.5H1M4 4L0.8 7.5L4 11" fill="none" stroke="#a4a4a4" stroke-width="1"/></svg>
<span class="code" style="left:80.0px;top:437px"><i>·</i><i>·</i><i>·</i><i>·</i><i>·</i><i>·</i><i>·</i><i>·</i><i>·</i><i>·</i><i>·</i><i>·</i>break</span><svg style="left:199.0px;top:435px" width="7" height="15" viewBox="0 0 7 15"><path d="M6.5 1V7.5H1M4 4L0.8 7.5L4 11" fill="none" stroke="#a4a4a4" stroke-width="1"/></svg>
<span class="code" style="left:80.0px;top:452px"><i>·</i><i>·</i><i>·</i><i>·</i><i>·</i><i>·</i><i>·</i><i>·</i>end</span><svg style="left:157.0px;top:450px" width="7" height="15" viewBox="0 0 7 15"><path d="M6.5 1V7.5H1M4 4L0.8 7.5L4 11" fill="none" stroke="#a4a4a4" stroke-width="1"/></svg>
<span class="code" style="left:80.0px;top:467px"><i>·</i><i>·</i><i>·</i><i>·</i><i>·</i><i>·</i><i>·</i><i>·</i>i<i>·</i>=<i>·</i>i<i>·</i>+<i>·</i>1</span><svg style="left:199.0px;top:465px" width="7" height="15" viewBox="0 0 7 15"><path d="M6.5 1V7.5H1M4 4L0.8 7.5L4 11" fill="none" stroke="#a4a4a4" stroke-width="1"/></svg>
<span class="code" style="left:80.0px;top:482px"><i>·</i><i>·</i><i>·</i><i>·</i>end</span><svg style="left:129.0px;top:480px" width="7" height="15" viewBox="0 0 7 15"><path d="M6.5 1V7.5H1M4 4L0.8 7.5L4 11" fill="none" stroke="#a4a4a4" stroke-width="1"/></svg>
<span class="code" style="left:80.0px;top:497px"></span><svg style="left:80.0px;top:495px" width="7" height="15" viewBox="0 0 7 15"><path d="M6.5 1V7.5H1M4 4L0.8 7.5L4 11" fill="none" stroke="#a4a4a4" stroke-width="1"/></svg>
<span class="code" style="left:80.0px;top:512px"><i>·</i><i>·</i><i>·</i><i>·</i>val<i>·</i>=<i>·</i>tonumber(str:sub(1,<i>·</i>i<i>·</i>-<i>·</i>1))<i>·</i>or<i>·</i>val</span><svg style="left:388.0px;top:510px" width="7" height="15" viewBox="0 0 7 15"><path d="M6.5 1V7.5H1M4 4L0.8 7.5L4 11" fill="none" stroke="#a4a4a4" stroke-width="1"/></svg>
<span class="code" style="left:80.0px;top:527px"><i>·</i><i>·</i><i>·</i><i>·</i></span><svg style="left:108.0px;top:525px" width="7" height="15" viewBox="0 0 7 15"><path d="M6.5 1V7.5H1M4 4L0.8 7.5L4 11" fill="none" stroke="#a4a4a4" stroke-width="1"/></svg>
<span class="code" style="left:80.0px;top:542px"><i>·</i><i>·</i><i>·</i><i>·</i>local<i>·</i>targetVal<i>·</i>=<i>·</i>isAdd<i>·</i>and<i>·</i><i>·</i>(self.lastUserWinScore<i>·</i>+<i>·</i>val)<i>·</i>or<i>·</i>val</span><svg style="left:563.0px;top:540px" width="7" height="15" viewBox="0 0 7 15"><path d="M6.5 1V7.5H1M4 4L0.8 7.5L4 11" fill="none" stroke="#a4a4a4" stroke-width="1"/></svg>
<span class="code" style="left:80.0px;top:557px"><i>·</i><i>·</i><i>·</i><i>·</i>if<i>·</i>isImmediately<i>·</i>then</span><svg style="left:255.0px;top:555px" width="7" height="15" viewBox="0 0 7 15"><path d="M6.5 1V7.5H1M4 4L0.8 7.5L4 11" fill="none" stroke="#a4a4a4" stroke-width="1"/></svg>
<span class="code" style="left:80.0px;top:572px"><i>·</i><i>·</i><i>·</i><i>·</i><i>·</i><i>·</i><i>·</i><i>·</i>self.winValLabel.text<i>·</i>=<i>·</i>CC.CSlotsHelper.GetNumberStr(targetVal,&quot;,&quot;)</span><svg style="left:605.0px;top:570px" width="7" height="15" viewBox="0 0 7 15"><path d="M6.5 1V7.5H1M4 4L0.8 7.5L4 11" fill="none" stroke="#a4a4a4" stroke-width="1"/></svg>
<span class="code" style="left:80.0px;top:602px"><i>·</i><i>·</i><i>·</i><i>·</i><i>·</i><i>·</i><i>·</i><i>·</i>self.lastUserWinScore<i>·</i>=<i>·</i>targetVal</span><svg style="left:367.0px;top:600px" width="7" height="15" viewBox="0 0 7 15"><path d="M6.5 1V7.5H1M4 4L0.8 7.5L4 11" fill="none" stroke="#a4a4a4" stroke-width="1"/></svg>
<span class="code" style="left:80.0px;top:617px"><i>·</i><i>·</i><i>·</i><i>·</i><i>·</i><i>·</i><i>·</i><i>·</i>return</span><svg style="left:178.0px;top:615px" width="7" height="15" viewBox="0 0 7 15"><path d="M6.5 1V7.5H1M4 4L0.8 7.5L4 11" fill="none" stroke="#a4a4a4" stroke-width="1"/></svg>
<span class="code" style="left:80.0px;top:632px"><i>·</i><i>·</i><i>·</i><i>·</i>end</span><svg style="left:129.0px;top:630px" width="7" height="15" viewBox="0 0 7 15"><path d="M6.5 1V7.5H1M4 4L0.8 7.5L4 11" fill="none" stroke="#a4a4a4" stroke-width="1"/></svg>
<span class="code" style="left:80.0px;top:647px"><i>·</i><i>·</i><i>·</i><i>·</i>local<i>·</i>durationTemp<i>·</i>=<i>·</i>duration<i>·</i>and<i>·</i>duration<i>·</i>or<i>·</i>0.6</span><svg style="left:451.0px;top:645px" width="7" height="15" viewBox="0 0 7 15"><path d="M6.5 1V7.5H1M4 4L0.8 7.5L4 11" fill="none" stroke="#a4a4a4" stroke-width="1"/></svg>
<span class="code" style="left:80.0px;top:662px"><i>·</i><i>·</i><i>·</i><i>·</i>local<i>·</i>changeCount<i>·</i>=<i>·</i>durationTemp<i>·</i>/<i>·</i>0.02<i>·</i>-<i>·</i>1</span><svg style="left:409.0px;top:660px" width="7" height="15" viewBox="0 0 7 15"><path d="M6.5 1V7.5H1M4 4L0.8 7.5L4 11" fill="none" stroke="#a4a4a4" stroke-width="1"/></svg>
<span class="code" style="left:80.0px;top:677px"><i>·</i><i>·</i><i>·</i><i>·</i>self:ChangeLabelToTargetVal(self.lastUserWinScore,targetVal,0.02,changeCount,self.winValLabel,2,isTimeScale)</span><svg style="left:864.0px;top:675px" width="7" height="15" viewBox="0 0 7 15"><path d="M6.5 1V7.5H1M4 4L0.8 7.5L4 11" fill="none" stroke="#a4a4a4" stroke-width="1"/></svg>
<span class="code" style="left:80.0px;top:692px"><i>·</i><i>·</i><i>·</i><i>·</i>self.lastUserWinScore<i>·</i>=<i>·</i>targetVal</span><svg style="left:339.0px;top:690px" width="7" height="15" viewBox="0 0 7 15"><path d="M6.5 1V7.5H1M4 4L0.8 7.5L4 11" fill="none" stroke="#a4a4a4" stroke-width="1"/></svg>
<span class="code" style="left:80.0px;top:707px"></span><svg style="left:80.0px;top:705px" width="7" height="15" viewBox="0 0 7 15"><path d="M6.5 1V7.5H1M4 4L0.8 7.5L4 11" fill="none" stroke="#a4a4a4" stroke-width="1"/></svg>
</div></div>
<span class="ln" style="left:36px;top:182px">273</span>
<span class="ln" style="left:36px;top:197px">274</span>
<span class="ln" style="left:36px;top:212px">275</span>
<span class="ln" style="left:36px;top:227px">276</span>
<span class="ln" style="left:36px;top:242px">277</span>
<span class="ln" style="left:36px;top:257px">278</span>
<span class="ln" style="left:36px;top:272px">279</span>
<span class="ln" style="left:36px;top:287px">280</span>
<span class="ln" style="left:36px;top:302px">281</span>
<span class="ln" style="left:36px;top:317px">282</span>
<span class="ln" style="left:36px;top:332px">283</span>
<span class="ln" style="left:36px;top:347px">284</span>
<span class="ln" style="left:36px;top:362px">285</span>
<span class="ln" style="left:36px;top:377px">286</span>
<span class="ln" style="left:36px;top:392px">287</span>
<span class="ln" style="left:36px;top:407px">288</span>
<span class="ln" style="left:36px;top:422px">289</span>
<span class="ln" style="left:36px;top:437px">290</span>
<span class="ln" style="left:36px;top:452px">291</span>
<span class="ln" style="left:36px;top:467px">292</span>
<span class="ln" style="left:36px;top:482px">293</span>
<span class="ln" style="left:36px;top:497px">294</span>
<span class="ln" style="left:36px;top:512px">295</span>
<span class="ln" style="left:36px;top:527px">296</span>
<span class="ln" style="left:36px;top:542px">297</span>
<span class="ln" style="left:36px;top:557px">298</span>
<span class="ln" style="left:36px;top:572px">299</span>
<span class="ln" style="left:36px;top:602px">300</span>
<span class="ln" style="left:36px;top:617px">301</span>
<span class="ln" style="left:36px;top:632px">302</span>
<span class="ln" style="left:36px;top:647px">303</span>
<span class="ln" style="left:36px;top:662px">304</span>
<span class="ln" style="left:36px;top:677px">305</span>
<span class="ln" style="left:36px;top:692px">306</span>
<span class="ln" style="left:36px;top:707px">307</span>
<div class="a" style="left:43px;top:576.7px;width:8px;height:2.6px;background:#2aa0b4"></div>
<div class="row" style="left:1024px;top:570px;width:760px;background:#ffff00"></div>
<div class="row" style="left:1024px;top:585px;width:760px;background:#ffff00"></div>
<div class="row" style="left:1024px;top:570px;width:539.0px;background:#dcdcfa"></div>
<div class="a" style="left:1024px;top:570px;width:760px;height:2px;background:#000"></div>
<div class="a" style="left:1024px;top:598px;width:760px;height:2px;background:#000"></div>
<div class="a" style="left:1080px;top:572px;width:14px;height:13px;background:#ffff9c"></div>
<div class="a" style="left:1080px;top:570px;width:2px;height:2px;background:#fff"></div>
<div class="a" style="left:1080px;top:572px;width:2px;height:13px;background:#000078"></div>
<span class="ln" style="left:980px;top:182px">273</span>
<span class="code" style="left:1024.0px;top:182px"><i>·</i><i>·</i><i>·</i><i>·</i>--<i>·</i><i>·</i><i>·</i><i>·</i><i>·</i><i>·</i><i>·</i><i>·</i>return</span><svg style="left:1164.0px;top:180px" width="7" height="15" viewBox="0 0 7 15"><path d="M6.5 1V7.5H1M4 4L0.8 7.5L4 11" fill="none" stroke="#a4a4a4" stroke-width="1"/></svg>
<span class="ln" style="left:980px;top:197px">274</span>
<span class="code" style="left:1024.0px;top:197px"><i>·</i><i>·</i><i>·</i><i>·</i>--<i>·</i><i>·</i><i>·</i><i>·</i>end</span><svg style="left:1115.0px;top:195px" width="7" height="15" viewBox="0 0 7 15"><path d="M6.5 1V7.5H1M4 4L0.8 7.5L4 11" fill="none" stroke="#a4a4a4" stroke-width="1"/></svg>
<span class="ln" style="left:980px;top:212px">275</span>
<span class="code" style="left:1024.0px;top:212px"><i>·</i><i>·</i><i>·</i><i>·</i>--end</span><svg style="left:1087.0px;top:210px" width="7" height="15" viewBox="0 0 7 15"><path d="M6.5 1V7.5H1M4 4L0.8 7.5L4 11" fill="none" stroke="#a4a4a4" stroke-width="1"/></svg>
<span class="ln" style="left:980px;top:227px">276</span>
<span class="code" style="left:1024.0px;top:227px"></span><svg style="left:1024.0px;top:225px" width="7" height="15" viewBox="0 0 7 15"><path d="M6.5 1V7.5H1M4 4L0.8 7.5L4 11" fill="none" stroke="#a4a4a4" stroke-width="1"/></svg>
<span class="ln" style="left:980px;top:242px">277</span>
<span class="code" style="left:1024.0px;top:242px"><i>·</i><i>·</i><i>·</i><i>·</i>local<i>·</i>str<i>·</i>=<i>·</i>tostring(val)</span><svg style="left:1227.0px;top:240px" width="7" height="15" viewBox="0 0 7 15"><path d="M6.5 1V7.5H1M4 4L0.8 7.5L4 11" fill="none" stroke="#a4a4a4" stroke-width="1"/></svg>
<span class="ln" style="left:980px;top:257px">278</span>
<span class="code" style="left:1024.0px;top:257px"><i>·</i><i>·</i><i>·</i><i>·</i>local<i>·</i>i<i>·</i>=<i>·</i>1</span><svg style="left:1129.0px;top:255px" width="7" height="15" viewBox="0 0 7 15"><path d="M6.5 1V7.5H1M4 4L0.8 7.5L4 11" fill="none" stroke="#a4a4a4" stroke-width="1"/></svg>
<span class="ln" style="left:980px;top:272px">279</span>
<span class="code" style="left:1024.0px;top:272px"><i>·</i><i>·</i><i>·</i><i>·</i>local<i>·</i>len<i>·</i>=<i>·</i>#str</span><svg style="left:1164.0px;top:270px" width="7" height="15" viewBox="0 0 7 15"><path d="M6.5 1V7.5H1M4 4L0.8 7.5L4 11" fill="none" stroke="#a4a4a4" stroke-width="1"/></svg>
<span class="ln" style="left:980px;top:287px">280</span>
<span class="code" style="left:1024.0px;top:287px"></span><svg style="left:1024.0px;top:285px" width="7" height="15" viewBox="0 0 7 15"><path d="M6.5 1V7.5H1M4 4L0.8 7.5L4 11" fill="none" stroke="#a4a4a4" stroke-width="1"/></svg>
<span class="ln" style="left:980px;top:302px">281</span>
<span class="code" style="left:1024.0px;top:302px"><i>·</i><i>·</i><i>·</i><i>·</i>--<i>·</i><b>处</b><b>理</b><b>负</b><b>号</b></span><svg style="left:1129.0px;top:300px" width="7" height="15" viewBox="0 0 7 15"><path d="M6.5 1V7.5H1M4 4L0.8 7.5L4 11" fill="none" stroke="#a4a4a4" stroke-width="1"/></svg>
<span class="ln" style="left:980px;top:317px">282</span>
<span class="code" style="left:1024.0px;top:317px"><i>·</i><i>·</i><i>·</i><i>·</i>if<i>·</i>len<i>·</i>&gt;<i>·</i>0<i>·</i>and<i>·</i>str:sub(1,<i>·</i>1)<i>·</i>==<i>·</i>&#x27;-&#x27;<i>·</i>then</span><svg style="left:1332.0px;top:315px" width="7" height="15" viewBox="0 0 7 15"><path d="M6.5 1V7.5H1M4 4L0.8 7.5L4 11" fill="none" stroke="#a4a4a4" stroke-width="1"/></svg>
<span class="ln" style="left:980px;top:332px">283</span>
<span class="code" style="left:1024.0px;top:332px"><i>·</i><i>·</i><i>·</i><i>·</i><i>·</i><i>·</i><i>·</i><i>·</i>i<i>·</i>=<i>·</i>2</span><svg style="left:1115.0px;top:330px" width="7" height="15" viewBox="0 0 7 15"><path d="M6.5 1V7.5H1M4 4L0.8 7.5L4 11" fill="none" stroke="#a4a4a4" stroke-width="1"/></svg>
<span class="ln" style="left:980px;top:347px">284</span>
<span class="code" style="left:1024.0px;top:347px"><i>·</i><i>·</i><i>·</i><i>·</i>end</span><svg style="left:1073.0px;top:345px" width="7" height="15" viewBox="0 0 7 15"><path d="M6.5 1V7.5H1M4 4L0.8 7.5L4 11" fill="none" stroke="#a4a4a4" stroke-width="1"/></svg>
<span class="ln" style="left:980px;top:362px">285</span>
<span class="code" style="left:1024.0px;top:362px"></span><svg style="left:1024.0px;top:360px" width="7" height="15" viewBox="0 0 7 15"><path d="M6.5 1V7.5H1M4 4L0.8 7.5L4 11" fill="none" stroke="#a4a4a4" stroke-width="1"/></svg>
<span class="ln" style="left:980px;top:377px">286</span>
<span class="code" style="left:1024.0px;top:377px"><i>·</i><i>·</i><i>·</i><i>·</i>--<i>·</i><b>遍</b><b>历</b><b>找</b><b>到</b><b>第</b><b>一</b><b>个</b><b>非</b><b>数</b><b>字</b><b>字</b><b>符</b></span><svg style="left:1241.0px;top:375px" width="7" height="15" viewBox="0 0 7 15"><path d="M6.5 1V7.5H1M4 4L0.8 7.5L4 11" fill="none" stroke="#a4a4a4" stroke-width="1"/></svg>
<span class="ln" style="left:980px;top:392px">287</span>
<span class="code" style="left:1024.0px;top:392px"><i>·</i><i>·</i><i>·</i><i>·</i>while<i>·</i>i<i>·</i>&lt;=<i>·</i>len<i>·</i>do</span><svg style="left:1171.0px;top:390px" width="7" height="15" viewBox="0 0 7 15"><path d="M6.5 1V7.5H1M4 4L0.8 7.5L4 11" fill="none" stroke="#a4a4a4" stroke-width="1"/></svg>
<span class="ln" style="left:980px;top:407px">288</span>
<span class="code" style="left:1024.0px;top:407px"><i>·</i><i>·</i><i>·</i><i>·</i><i>·</i><i>·</i><i>·</i><i>·</i>local<i>·</i>char<i>·</i>=<i>·</i>str:sub(i,<i>·</i>i)</span><svg style="left:1262.0px;top:405px" width="7" height="15" viewBox="0 0 7 15"><path d="M6.5 1V7.5H1M4 4L0.8 7.5L4 11" fill="none" stroke="#a4a4a4" stroke-width="1"/></svg>
<span class="ln" style="left:980px;top:422px">289</span>
<span class="code" style="left:1024.0px;top:422px"><i>·</i><i>·</i><i>·</i><i>·</i><i>·</i><i>·</i><i>·</i><i>·</i>if<i>·</i>char<i>·</i>&lt;<i>·</i>&#x27;0&#x27;<i>·</i>or<i>·</i>char<i>·</i>&gt;<i>·</i>&#x27;9&#x27;<i>·</i>then</span><svg style="left:1304.0px;top:420px" width="7" height="15" viewBox="0 0 7 15"><path d="M6.5 1V7.5H1M4 4L0.8 7.5L4 11" fill="none" stroke="#a4a4a4" stroke-width="1"/></svg>
<span class="ln" style="left:980px;top:437px">290</span>
<span class="code" style="left:1024.0px;top:437px"><i>·</i><i>·</i><i>·</i><i>·</i><i>·</i><i>·</i><i>·</i><i>·</i><i>·</i><i>·</i><i>·</i><i>·</i>break</span><svg style="left:1143.0px;top:435px" width="7" height="15" viewBox="0 0 7 15"><path d="M6.5 1V7.5H1M4 4L0.8 7.5L4 11" fill="none" stroke="#a4a4a4" stroke-width="1"/></svg>
<span class="ln" style="left:980px;top:452px">291</span>
<span class="code" style="left:1024.0px;top:452px"><i>·</i><i>·</i><i>·</i><i>·</i><i>·</i><i>·</i><i>·</i><i>·</i>end</span><svg style="left:1101.0px;top:450px" width="7" height="15" viewBox="0 0 7 15"><path d="M6.5 1V7.5H1M4 4L0.8 7.5L4 11" fill="none" stroke="#a4a4a4" stroke-width="1"/></svg>
<span class="ln" style="left:980px;top:467px">292</span>
<span class="code" style="left:1024.0px;top:467px"><i>·</i><i>·</i><i>·</i><i>·</i><i>·</i><i>·</i><i>·</i><i>·</i>i<i>·</i>=<i>·</i>i<i>·</i>+<i>·</i>1</span><svg style="left:1143.0px;top:465px" width="7" height="15" viewBox="0 0 7 15"><path d="M6.5 1V7.5H1M4 4L0.8 7.5L4 11" fill="none" stroke="#a4a4a4" stroke-width="1"/></svg>
<span class="ln" style="left:980px;top:482px">293</span>
<span class="code" style="left:1024.0px;top:482px"><i>·</i><i>·</i><i>·</i><i>·</i>end</span><svg style="left:1073.0px;top:480px" width="7" height="15" viewBox="0 0 7 15"><path d="M6.5 1V7.5H1M4 4L0.8 7.5L4 11" fill="none" stroke="#a4a4a4" stroke-width="1"/></svg>
<span class="ln" style="left:980px;top:497px">294</span>
<span class="code" style="left:1024.0px;top:497px"></span><svg style="left:1024.0px;top:495px" width="7" height="15" viewBox="0 0 7 15"><path d="M6.5 1V7.5H1M4 4L0.8 7.5L4 11" fill="none" stroke="#a4a4a4" stroke-width="1"/></svg>
<span class="ln" style="left:980px;top:512px">295</span>
<span class="code" style="left:1024.0px;top:512px"><i>·</i><i>·</i><i>·</i><i>·</i>val<i>·</i>=<i>·</i>tonumber(str:sub(1,<i>·</i>i<i>·</i>-<i>·</i>1))<i>·</i>or<i>·</i>val</span><svg style="left:1332.0px;top:510px" width="7" height="15" viewBox="0 0 7 15"><path d="M6.5 1V7.5H1M4 4L0.8 7.5L4 11" fill="none" stroke="#a4a4a4" stroke-width="1"/></svg>
<span class="ln" style="left:980px;top:527px">296</span>
<span class="code" style="left:1024.0px;top:527px"><i>·</i><i>·</i><i>·</i><i>·</i></span><svg style="left:1052.0px;top:525px" width="7" height="15" viewBox="0 0 7 15"><path d="M6.5 1V7.5H1M4 4L0.8 7.5L4 11" fill="none" stroke="#a4a4a4" stroke-width="1"/></svg>
<span class="ln" style="left:980px;top:542px">297</span>
<span class="code" style="left:1024.0px;top:542px"><i>·</i><i>·</i><i>·</i><i>·</i>local<i>·</i>targetVal<i>·</i>=<i>·</i>isAdd<i>·</i>and<i>·</i><i>·</i>(self.lastUserWinScore<i>·</i>+<i>·</i>val)<i>·</i>or<i>·</i>val</span><svg style="left:1507.0px;top:540px" width="7" height="15" viewBox="0 0 7 15"><path d="M6.5 1V7.5H1M4 4L0.8 7.5L4 11" fill="none" stroke="#a4a4a4" stroke-width="1"/></svg>
<span class="ln" style="left:980px;top:557px">298</span>
<span class="code" style="left:1024.0px;top:557px"><i>·</i><i>·</i><i>·</i><i>·</i>if<i>·</i>isImmediately<i>·</i>then</span><svg style="left:1199.0px;top:555px" width="7" height="15" viewBox="0 0 7 15"><path d="M6.5 1V7.5H1M4 4L0.8 7.5L4 11" fill="none" stroke="#a4a4a4" stroke-width="1"/></svg>
<span class="ln" style="left:980px;top:572px">299</span>
<span class="code" style="left:1024.0px;top:572px"><i>·</i><i>·</i><i>·</i><i>·</i><i>·</i><i>·</i><i>·</i><i>·</i>--self.winValLabel.text<i>·</i>=<i>·</i>CC.CSlotsHelper.GetNumberStr(targetVal,&quot;,&quot;)</span><svg style="left:1563.0px;top:570px" width="7" height="15" viewBox="0 0 7 15"><path d="M6.5 1V7.5H1M4 4L0.8 7.5L4 11" fill="none" stroke="#a4a4a4" stroke-width="1"/></svg>
<span class="ln" style="left:980px;top:587px">300</span>
<span class="code" style="left:1024.0px;top:587px"><i>·</i><i>·</i><i>·</i><i>·</i><i>·</i><i>·</i><i>·</i><i>·</i>self.winValLabel.text<i>·</i>=<i>·</i>CC.CSlotsHelper.GetColoredWinValue(targetVal)</span><svg style="left:1563.0px;top:585px" width="7" height="15" viewBox="0 0 7 15"><path d="M6.5 1V7.5H1M4 4L0.8 7.5L4 11" fill="none" stroke="#a4a4a4" stroke-width="1"/></svg>
<span class="ln" style="left:980px;top:602px">301</span>
<span class="code" style="left:1024.0px;top:602px"><i>·</i><i>·</i><i>·</i><i>·</i><i>·</i><i>·</i><i>·</i><i>·</i>self.lastUserWinScore<i>·</i>=<i>·</i>targetVal</span><svg style="left:1311.0px;top:600px" width="7" height="15" viewBox="0 0 7 15"><path d="M6.5 1V7.5H1M4 4L0.8 7.5L4 11" fill="none" stroke="#a4a4a4" stroke-width="1"/></svg>
<span class="ln" style="left:980px;top:617px">302</span>
<span class="code" style="left:1024.0px;top:617px"><i>·</i><i>·</i><i>·</i><i>·</i><i>·</i><i>·</i><i>·</i><i>·</i>return</span><svg style="left:1122.0px;top:615px" width="7" height="15" viewBox="0 0 7 15"><path d="M6.5 1V7.5H1M4 4L0.8 7.5L4 11" fill="none" stroke="#a4a4a4" stroke-width="1"/></svg>
<span class="ln" style="left:980px;top:632px">303</span>
<span class="code" style="left:1024.0px;top:632px"><i>·</i><i>·</i><i>·</i><i>·</i>end</span><svg style="left:1073.0px;top:630px" width="7" height="15" viewBox="0 0 7 15"><path d="M6.5 1V7.5H1M4 4L0.8 7.5L4 11" fill="none" stroke="#a4a4a4" stroke-width="1"/></svg>
<span class="ln" style="left:980px;top:647px">304</span>
<span class="code" style="left:1024.0px;top:647px"><i>·</i><i>·</i><i>·</i><i>·</i>local<i>·</i>durationTemp<i>·</i>=<i>·</i>duration<i>·</i>and<i>·</i>duration<i>·</i>or<i>·</i>0.6</span><svg style="left:1395.0px;top:645px" width="7" height="15" viewBox="0 0 7 15"><path d="M6.5 1V7.5H1M4 4L0.8 7.5L4 11" fill="none" stroke="#a4a4a4" stroke-width="1"/></svg>
<span class="ln" style="left:980px;top:662px">305</span>
<span class="code" style="left:1024.0px;top:662px"><i>·</i><i>·</i><i>·</i><i>·</i>local<i>·</i>changeCount<i>·</i>=<i>·</i>durationTemp<i>·</i>/<i>·</i>0.02<i>·</i>-<i>·</i>1</span><svg style="left:1353.0px;top:660px" width="7" height="15" viewBox="0 0 7 15"><path d="M6.5 1V7.5H1M4 4L0.8 7.5L4 11" fill="none" stroke="#a4a4a4" stroke-width="1"/></svg>
<span class="ln" style="left:980px;top:677px">306</span>
<span class="code" style="left:1024.0px;top:677px"><i>·</i><i>·</i><i>·</i><i>·</i>self:ChangeLabelToTargetVal(self.lastUserWinScore,targetVal,0.02,changeCount,self.winValLabel,2,isTimeScale)</span><svg style="left:1808.0px;top:675px" width="7" height="15" viewBox="0 0 7 15"><path d="M6.5 1V7.5H1M4 4L0.8 7.5L4 11" fill="none" stroke="#a4a4a4" stroke-width="1"/></svg>
<span class="ln" style="left:980px;top:692px">307</span>
<span class="code" style="left:1024.0px;top:692px"><i>·</i><i>·</i><i>·</i><i>·</i>self.lastUserWinScore<i>·</i>=<i>·</i>targetVal</span><svg style="left:1283.0px;top:690px" width="7" height="15" viewBox="0 0 7 15"><path d="M6.5 1V7.5H1M4 4L0.8 7.5L4 11" fill="none" stroke="#a4a4a4" stroke-width="1"/></svg>
<span class="ln" style="left:980px;top:707px">308</span>
<span class="code" style="left:1024.0px;top:707px"></span><svg style="left:1024.0px;top:705px" width="7" height="15" viewBox="0 0 7 15"><path d="M6.5 1V7.5H1M4 4L0.8 7.5L4 11" fill="none" stroke="#a4a4a4" stroke-width="1"/></svg>
<div class="a" style="left:987px;top:577px;width:8px;height:2px;background:#2aa0b4"></div>
<div class="a" style="left:990px;top:574px;width:2px;height:8px;background:#2aa0b4"></div>
<div class="a" style="left:987px;top:592px;width:8px;height:2px;background:#2aa0b4"></div>
<div class="a" style="left:990px;top:589px;width:2px;height:8px;background:#2aa0b4"></div>
<div class="a" style="left:1284px;top:147px;width:328px;height:71px;border:3px solid #ed1c24"></div>
<div class="a" style="left:1072px;top:554px;width:502px;height:65px;border:3px solid #ed1c24"></div>
</body></html>
